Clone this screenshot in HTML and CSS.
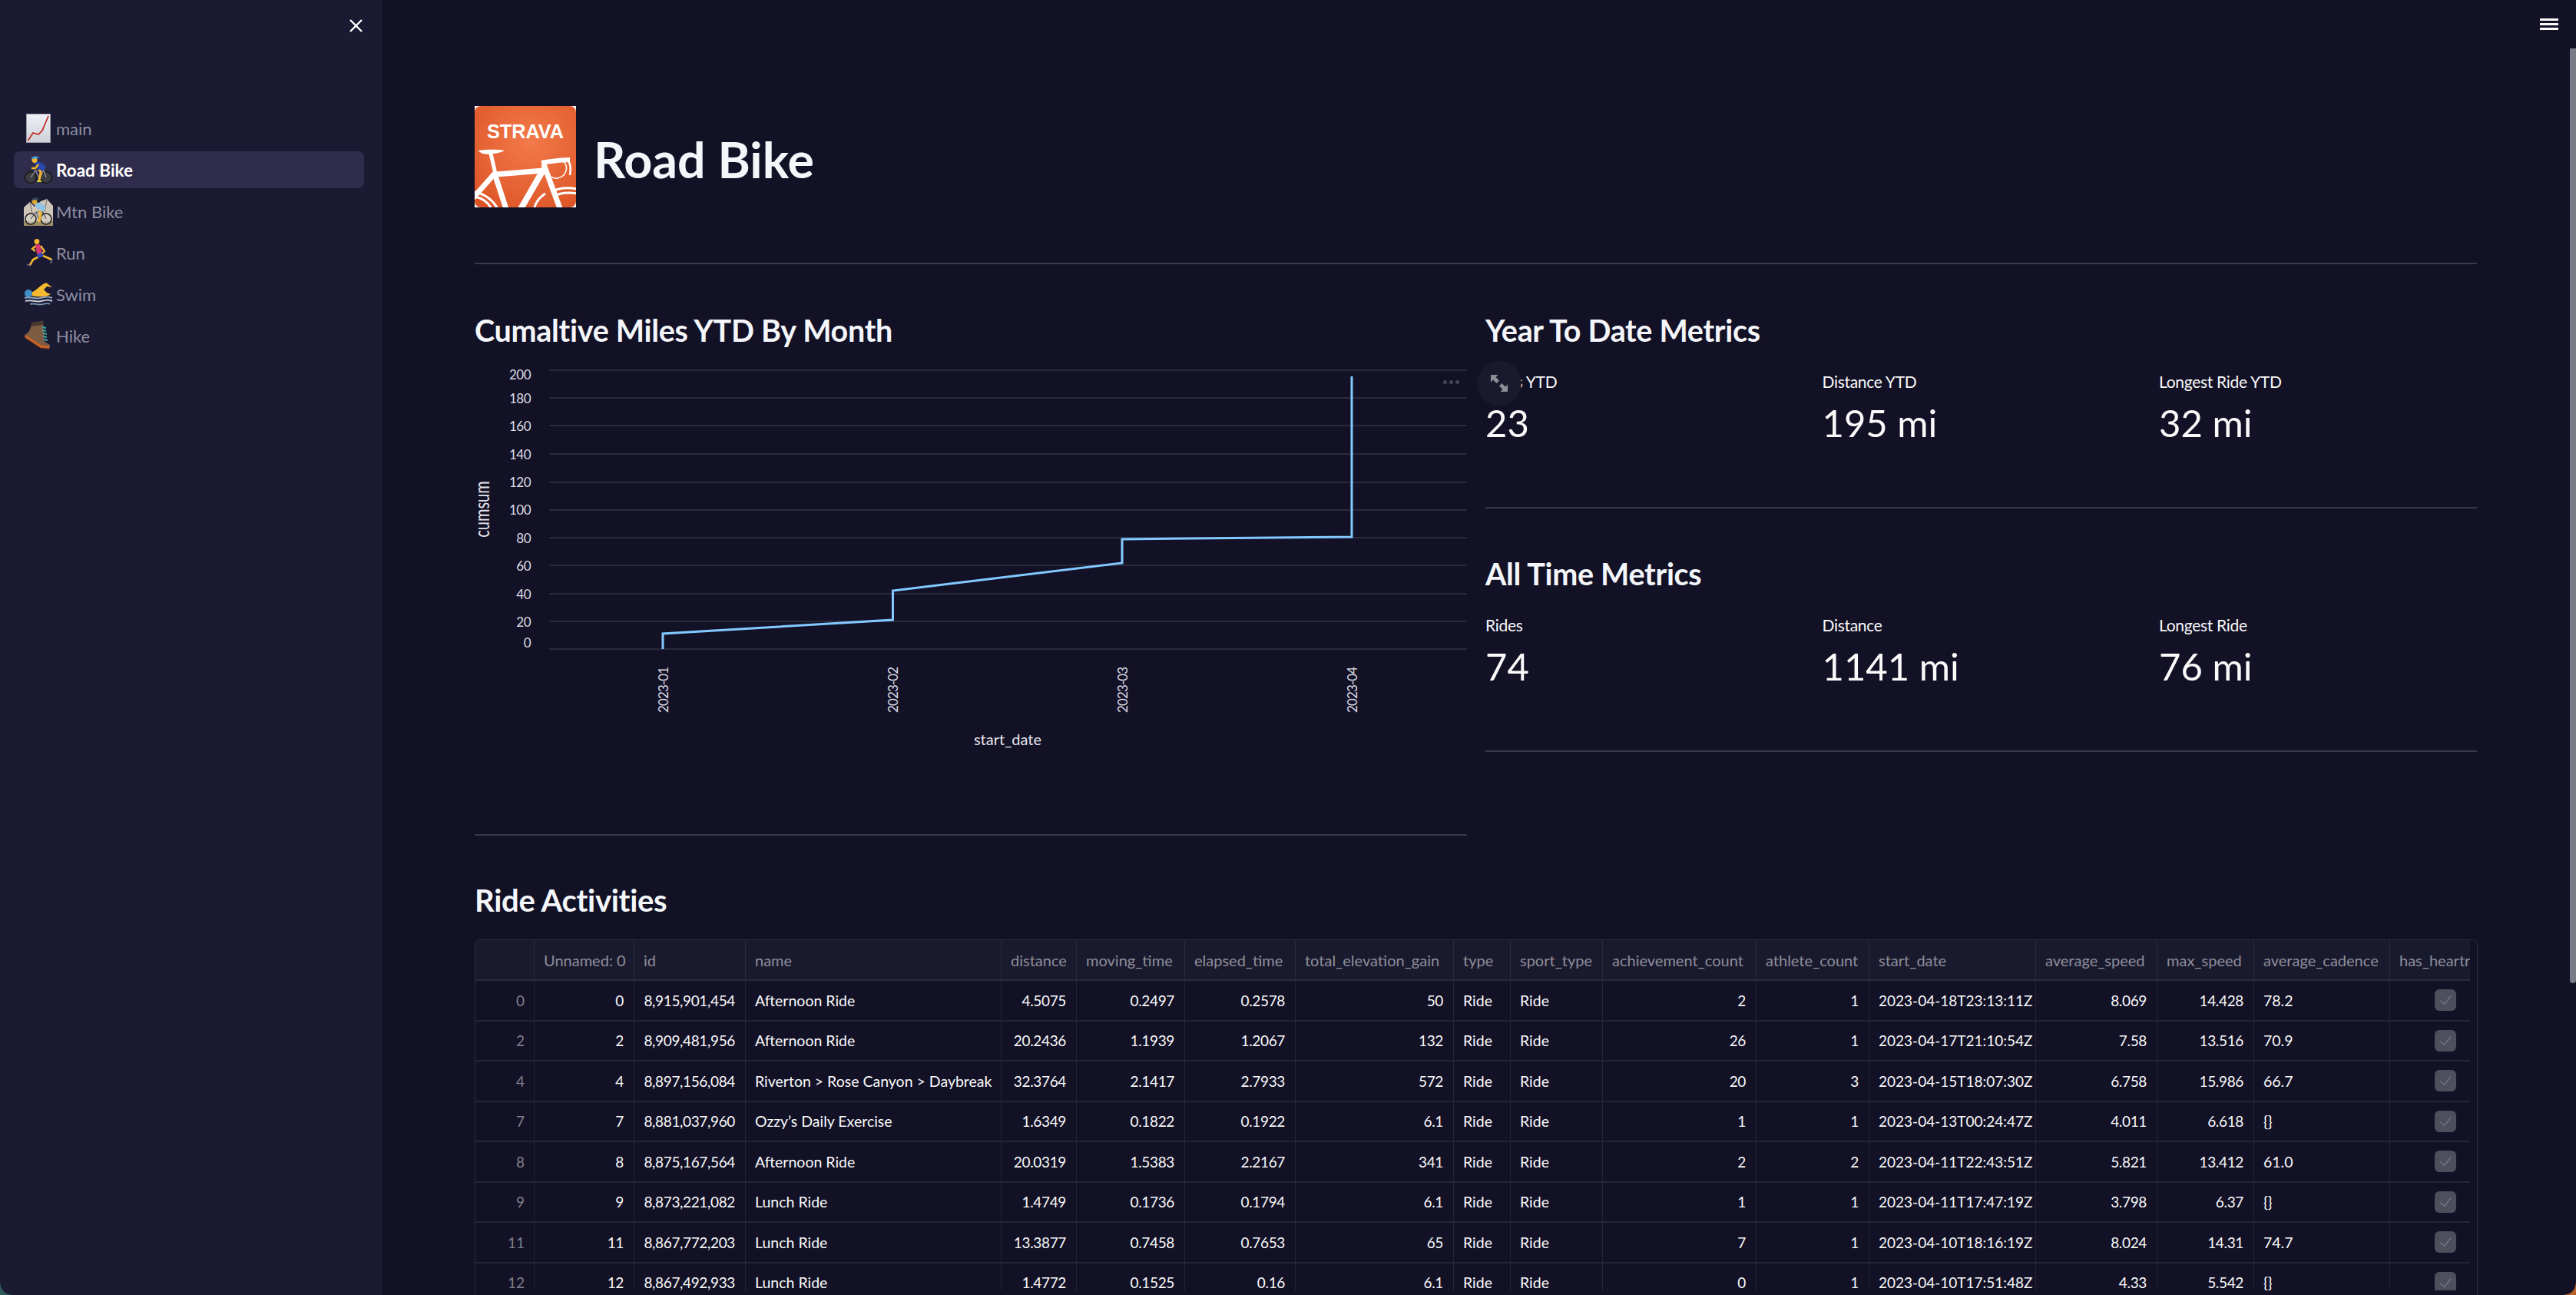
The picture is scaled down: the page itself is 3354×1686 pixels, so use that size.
FILE: index.html
```html
<!DOCTYPE html>
<html lang="en">
<head>
    <meta charset="UTF-8">
    <title>Road Bike</title>
    <link rel="stylesheet" href="styles.css">
</head>
<body>
<div class="app">
    <aside class="sidebar">
        <button class="close-btn" aria-label="Close sidebar">
            <svg width="17" height="17" viewBox="0 0 17 17"><path d="M1 1L16 16M16 1L1 16" stroke="#fff" stroke-width="2.4" fill="none"/></svg>
        </button>
        <nav class="nav">
            <a class="nav-item">
                <svg class="emoji" viewBox="0 0 38 38"><defs><linearGradient id="paper" x1="0" y1="0" x2="0" y2="1"><stop offset="0" stop-color="#eef1f5"/><stop offset="1" stop-color="#cdd1d8"/></linearGradient></defs><rect x="3.500" y="0.500" width="31" height="37" fill="url(#paper)" stroke="#9b9da5"/><path d="M5.500 35L12 25L19 27L24 22L32 3" stroke="#c0281f" stroke-width="1.700" fill="none"/></svg>
                <span>main</span>
            </a>
            <a class="nav-item active">
                <svg class="emoji" viewBox="0 0 38 38"><circle cx="9" cy="29" r="7.500" fill="#3c3d42" stroke="#17171a" stroke-width="1.600"/><circle cx="29" cy="29" r="7.500" fill="#3c3d42" stroke="#17171a" stroke-width="1.600"/><path d="M9 29L15 20L26 20L29 29M15 20L20 30L26 20" stroke="#9a9ba1" stroke-width="1.200" fill="none"/><path d="M20 15L22 23L20 33" stroke="#f4b92f" stroke-width="3" fill="none"/><path d="M17 34H23" stroke="#c7d62e" stroke-width="2"/><path d="M13 10C17 7 24 9 28 14C29 18 26 20 23 20L19 18Z" fill="#2b46ab"/><path d="M19 12L15 17L10 17" stroke="#f4b92f" stroke-width="2.400" fill="none"/><circle cx="14" cy="6.500" r="3.400" fill="#f4b92f"/><path d="M9.500 5C11 0.500 18 0 20 4L14 4.500Z" fill="#3f9bd8"/></svg>
                <span>Road Bike</span>
            </a>
            <a class="nav-item">
                <svg class="emoji" viewBox="0 0 38 38"><path d="M0 38V14L8 7L14 13L22 6L30 3L38 12V38Z" fill="#cfc6b9"/><path d="M8 7L11 22M30 3L27 20M20 8L18 16" stroke="#8f8880" stroke-width="1.500"/><rect y="32" width="38" height="6" fill="#a08f68"/><circle cx="9" cy="29" r="7" fill="#d7d2c8" fill-opacity="0.6" stroke="#1f1f22" stroke-width="1.600"/><circle cx="29" cy="29" r="7" fill="#d7d2c8" fill-opacity="0.6" stroke="#1f1f22" stroke-width="1.600"/><path d="M9 29L16 20L25 20L29 29M16 20L20 30L25 20" stroke="#55565c" stroke-width="1.200" fill="none"/><path d="M20 15L22 23L20 33" stroke="#f4b92f" stroke-width="3" fill="none"/><path d="M13 10C17 6 24 8 28 13C29 17 26 19 23 19L19 17Z" fill="#8fc4e6"/><circle cx="14" cy="6.500" r="3.400" fill="#e0a92a"/><path d="M9.500 5C11 0.500 18 0 20 4L14 4.500Z" fill="#33475e"/></svg>
                <span>Mtn Bike</span>
            </a>
            <a class="nav-item">
                <svg class="emoji" viewBox="0 0 38 38"><circle cx="17" cy="4.500" r="3.400" fill="#f4b92f"/><path d="M17 9L11 14L15 17" stroke="#f4b92f" stroke-width="2.400" fill="none"/><path d="M15 9L21 8L24 19L17 21Z" fill="#d9376f"/><path d="M22 10L27 17L23 21" stroke="#f4b92f" stroke-width="2.200" fill="none"/><path d="M17 21L24 19L25 24L18 26Z" fill="#2f4fb5"/><path d="M18 25L12 28L8 35" stroke="#f4b92f" stroke-width="2.600" fill="none"/><path d="M25 23L32 26L36 28" stroke="#f4b92f" stroke-width="2.600" fill="none"/><path d="M4 34L9 36M37 27L35 33" stroke="#6d7078" stroke-width="1.800"/></svg>
                <span>Run</span>
            </a>
            <a class="nav-item swim">
                <svg class="emoji" viewBox="0 0 38 32"><path d="M11 13C15 12 20 6 25 3L29 1L37 7L30 6L26 10L30 14L35 16C30 20 18 20 10 18Z" fill="#f4b92f"/><circle cx="6" cy="15" r="5" fill="#3f8fc9"/><path d="M1 21C8 18 14 23 22 21S32 19 37 21" stroke="#8fa8c4" stroke-width="2" fill="none"/><path d="M2 25C9 22 15 27 23 25S32 23 37 25" stroke="#c6d2e0" stroke-width="2" fill="none"/><path d="M8 29C14 27 18 31 25 29S32 28 34 29" stroke="#7d92ad" stroke-width="1.800" fill="none"/></svg>
                <span>Swim</span>
            </a>
            <a class="nav-item">
                <svg class="emoji" viewBox="0 0 38 38"><path d="M10 2L25 0L27 27L34 31L33 36L22 35L2 22L1 18C6 16 10 10 10 2Z" fill="#7c5c43"/><path d="M10 2L25 0L25 5L10 7Z" fill="#4a3a2e"/><path d="M1 19L2 22L22 35L33 36L34 31L33 33L22 31L4 19Z" fill="#c9622a"/><path d="M2 23L22 37L33 38L33 36L22 35L2 22Z" fill="#2c2320"/><path d="M24 8L29 9M24 12L29 13M25 16L30 17M25 20L30 21M26 24L31 25" stroke="#3fa6a3" stroke-width="2"/></svg>
                <span>Hike</span>
            </a>
        </nav>
    </aside>

    <main class="main">
        <header class="title-row">
            <svg class="strava-logo" width="132" height="132" viewBox="0 0 132 132">
                <defs>
                    <radialGradient id="stravaBg" cx="0.55" cy="0.35" r="0.8"><stop offset="0" stop-color="#f27a4a"/><stop offset="1" stop-color="#dc5325"/></radialGradient>
                    <clipPath id="stravaClip"><rect width="132" height="132"/></clipPath>
                </defs>
                <rect width="132" height="132" fill="#fff"/>
                <rect width="132" height="132" rx="8" fill="url(#stravaBg)"/>
                <text class="strava-word" x="66" y="42" text-anchor="middle" textLength="100" lengthAdjust="spacingAndGlyphs">STRAVA</text>
                <g clip-path="url(#stravaClip)" fill="none" stroke="#fff">
                    <path d="M4 58C14 57 28 56 39 58C32 62 24 62 18 63L10 62Z" fill="#fff" stroke="none"/>
                    <path d="M21 62L27 88" stroke-width="5"/>
                    <path d="M26 88L41 134" stroke-width="7"/>
                    <path d="M26 88L-4 122" stroke-width="7"/>
                    <path d="M28 89L90 84" stroke-width="7"/>
                    <path d="M90 82L60 134" stroke-width="8"/>
                    <path d="M90 76L112 136" stroke-width="7"/>
                    <path d="M87 74C100 72 110 70 124 70" stroke-width="6"/>
                    <path d="M112 72C120 72 122 82 116 90C112 94 104 96 100 92" stroke-width="1.600"/>
                    <path d="M122 72C126 76 125 84 124 90" stroke-width="2.500"/>
                    <path d="M100 112C110 106 122 106 134 108" stroke-width="3"/>
                    <path d="M102 118C112 112 122 112 134 114" stroke-width="3"/>
                    <path d="M78 132C80 124 86 118 92 114" stroke-width="3"/>
                    <path d="M0 112C12 114 24 122 30 134" stroke-width="3"/>
                    <path d="M0 118C10 120 18 126 22 134" stroke-width="3"/>
                </g>
            </svg>
            <h1>Road Bike</h1>
        </header>
        <hr class="rule rule-top">

        <section class="columns">
            <div class="col">
                <h2>Cumaltive Miles YTD By Month</h2>
                <div class="chart-wrap">
                    <svg class="chart" width="1292" height="590" viewBox="618 470 1292 590">
                        <g class="grid">
                            <line x1="715" x2="1910" y1="482" y2="482"/>
                            <line x1="715" x2="1910" y1="518" y2="518"/>
                            <line x1="715" x2="1910" y1="554" y2="554"/>
                            <line x1="715" x2="1910" y1="591" y2="591"/>
                            <line x1="715" x2="1910" y1="628" y2="628"/>
                            <line x1="715" x2="1910" y1="664" y2="664"/>
                            <line x1="715" x2="1910" y1="700" y2="700"/>
                            <line x1="715" x2="1910" y1="736" y2="736"/>
                            <line x1="715" x2="1910" y1="773" y2="773"/>
                            <line x1="715" x2="1910" y1="809" y2="809"/>
                            <line x1="715" x2="1910" y1="845" y2="845"/>
                        </g>
                        <g class="y-ticks">
                            <text x="691" y="494">200</text>
                            <text x="691" y="525">180</text>
                            <text x="691" y="561">160</text>
                            <text x="691" y="598">140</text>
                            <text x="691" y="634">120</text>
                            <text x="691" y="670">100</text>
                            <text x="691" y="707">80</text>
                            <text x="691" y="743">60</text>
                            <text x="691" y="780">40</text>
                            <text x="691" y="816">20</text>
                            <text x="691" y="843">0</text>
                        </g>
                        <path class="line" d="M863 845V825L1162.500 807V769L1461 733V702L1760 699V490"/>
                        <g class="x-ticks">
                            <text transform="translate(870 928) rotate(-90)">2023-01</text>
                            <text transform="translate(1169 928) rotate(-90)">2023-02</text>
                            <text transform="translate(1468 928) rotate(-90)">2023-03</text>
                            <text transform="translate(1767 928) rotate(-90)">2023-04</text>
                        </g>
                        <text class="axis-title" transform="translate(637 663) scale(1.3 1) rotate(-90)" text-anchor="middle">cumsum</text>
                        <text class="axis-title" x="1312" y="970" text-anchor="middle">start_date</text>
                    </svg>
                    <div class="chart-dots"><i></i><i></i><i></i></div>
                    <button class="expand-btn" aria-label="View fullscreen">
                        <svg width="22" height="22" viewBox="0 0 22 22"><path d="M0 0H9.500L6.500 3L11 7.500L7.500 11L3 6.500L0 9.500ZM22 22H12.500L15.500 19L11 14.500L14.500 11L19 15.500L22 12.500Z" fill="#8d8d97"/></svg>
                    </button>
                </div>
                <hr class="rule rule-chart">
            </div>
            <div class="col">
                <h2>Year To Date Metrics</h2>
                <div class="metrics">
                    <div class="metric"><div class="metric-label">Rides YTD</div><div class="metric-value">23</div></div>
                    <div class="metric"><div class="metric-label">Distance YTD</div><div class="metric-value">195 mi</div></div>
                    <div class="metric"><div class="metric-label">Longest Ride YTD</div><div class="metric-value">32 mi</div></div>
                </div>
                <hr class="rule rule-metrics">
                <h2>All Time Metrics</h2>
                <div class="metrics">
                    <div class="metric"><div class="metric-label">Rides</div><div class="metric-value">74</div></div>
                    <div class="metric"><div class="metric-label">Distance</div><div class="metric-value">1141 mi</div></div>
                    <div class="metric"><div class="metric-label">Longest Ride</div><div class="metric-value">76 mi</div></div>
                </div>
                <hr class="rule rule-metrics">
            </div>
        </section>

        <h2 class="table-heading">Ride Activities</h2>
        <div class="table-frame">
            <div class="table-clip">
                <table class="rides">
                    <colgroup>
                        <col class="w-idx"><col class="w-unnamed"><col class="w-id"><col class="w-name"><col class="w-distance"><col class="w-moving"><col class="w-elapsed"><col class="w-elev"><col class="w-type"><col class="w-sport"><col class="w-achieve"><col class="w-athlete"><col class="w-date"><col class="w-avg"><col class="w-max"><col class="w-cadence"><col class="w-heart">
                    </colgroup>
                    <thead>
                        <tr><th></th><th>Unnamed: 0</th><th>id</th><th>name</th><th>distance</th><th>moving_time</th><th>elapsed_time</th><th>total_elevation_gain</th><th>type</th><th>sport_type</th><th>achievement_count</th><th>athlete_count</th><th>start_date</th><th>average_speed</th><th>max_speed</th><th>average_cadence</th><th>has_heartrate</th></tr>
                    </thead>
                    <tbody>
                        <tr><td class="idx">0</td><td class="num">0</td><td class="num">8,915,901,454</td><td>Afternoon Ride</td><td class="num">4.5075</td><td class="num">0.2497</td><td class="num">0.2578</td><td class="num">50</td><td>Ride</td><td>Ride</td><td class="num">2</td><td class="num">1</td><td class="date">2023-04-18T23:13:11Z</td><td class="num">8.069</td><td class="num">14.428</td><td>78.2</td><td><span class="check"></span></td></tr>
                        <tr><td class="idx">2</td><td class="num">2</td><td class="num">8,909,481,956</td><td>Afternoon Ride</td><td class="num">20.2436</td><td class="num">1.1939</td><td class="num">1.2067</td><td class="num">132</td><td>Ride</td><td>Ride</td><td class="num">26</td><td class="num">1</td><td class="date">2023-04-17T21:10:54Z</td><td class="num">7.58</td><td class="num">13.516</td><td>70.9</td><td><span class="check"></span></td></tr>
                        <tr><td class="idx">4</td><td class="num">4</td><td class="num">8,897,156,084</td><td>Riverton &gt; Rose Canyon &gt; Daybreak</td><td class="num">32.3764</td><td class="num">2.1417</td><td class="num">2.7933</td><td class="num">572</td><td>Ride</td><td>Ride</td><td class="num">20</td><td class="num">3</td><td class="date">2023-04-15T18:07:30Z</td><td class="num">6.758</td><td class="num">15.986</td><td>66.7</td><td><span class="check"></span></td></tr>
                        <tr><td class="idx">7</td><td class="num">7</td><td class="num">8,881,037,960</td><td>Ozzy’s Daily Exercise</td><td class="num">1.6349</td><td class="num">0.1822</td><td class="num">0.1922</td><td class="num">6.1</td><td>Ride</td><td>Ride</td><td class="num">1</td><td class="num">1</td><td class="date">2023-04-13T00:24:47Z</td><td class="num">4.011</td><td class="num">6.618</td><td>{}</td><td><span class="check"></span></td></tr>
                        <tr><td class="idx">8</td><td class="num">8</td><td class="num">8,875,167,564</td><td>Afternoon Ride</td><td class="num">20.0319</td><td class="num">1.5383</td><td class="num">2.2167</td><td class="num">341</td><td>Ride</td><td>Ride</td><td class="num">2</td><td class="num">2</td><td class="date">2023-04-11T22:43:51Z</td><td class="num">5.821</td><td class="num">13.412</td><td>61.0</td><td><span class="check"></span></td></tr>
                        <tr><td class="idx">9</td><td class="num">9</td><td class="num">8,873,221,082</td><td>Lunch Ride</td><td class="num">1.4749</td><td class="num">0.1736</td><td class="num">0.1794</td><td class="num">6.1</td><td>Ride</td><td>Ride</td><td class="num">1</td><td class="num">1</td><td class="date">2023-04-11T17:47:19Z</td><td class="num">3.798</td><td class="num">6.37</td><td>{}</td><td><span class="check"></span></td></tr>
                        <tr><td class="idx">11</td><td class="num">11</td><td class="num">8,867,772,203</td><td>Lunch Ride</td><td class="num">13.3877</td><td class="num">0.7458</td><td class="num">0.7653</td><td class="num">65</td><td>Ride</td><td>Ride</td><td class="num">7</td><td class="num">1</td><td class="date">2023-04-10T18:16:19Z</td><td class="num">8.024</td><td class="num">14.31</td><td>74.7</td><td><span class="check"></span></td></tr>
                        <tr><td class="idx">12</td><td class="num">12</td><td class="num">8,867,492,933</td><td>Lunch Ride</td><td class="num">1.4772</td><td class="num">0.1525</td><td class="num">0.16</td><td class="num">6.1</td><td>Ride</td><td>Ride</td><td class="num">0</td><td class="num">1</td><td class="date">2023-04-10T17:51:48Z</td><td class="num">4.33</td><td class="num">5.542</td><td>{}</td><td><span class="check"></span></td></tr>
                    </tbody>
                </table>
            </div>
        </div>

        <button class="menu-btn" aria-label="Menu"><span></span><span></span><span></span></button>
        <div class="scroll-thumb"></div>
    </main>
</div>
</body>
</html>
```

FILE: styles.css
```css
* {
    box-sizing: border-box;
}

html, body {
    margin: 0;
    height: 100%;
    overflow: hidden;
}

body {
    font-family: "Lato", "Noto Sans", sans-serif;
    background-color: #121126;
    color: #fafafa;
}

button {
    background: none;
    border: none;
    padding: 0;
    display: flex;
}

.app {
    display: flex;
    height: 100vh;
    position: relative;
}

/* window corners, the desktop shows through them */
.app::before,
.app::after {
    content: "";
    position: absolute;
    bottom: 0;
    width: 15px;
    height: 15px;
    z-index: 3;
}

.app::before {
    left: 0;
    background: radial-gradient(circle at top right, transparent 14px, #2f5a5c 15px);
}

.app::after {
    right: 0;
    background: radial-gradient(circle at top left, transparent 14px, #b8602c 15px);
}

/* sidebar */
.sidebar {
    width: 498px;
    flex-shrink: 0;
    background-color: #1a1a33;
    padding: 25px 24px 0 18px;
}

.close-btn {
    margin-left: auto;
    margin-right: 2px;
}

.nav {
    margin-top: 101px;
    display: flex;
    flex-direction: column;
    gap: 6px;
}

.nav-item {
    height: 48px;
    padding-left: 13px;
    border-radius: 8px;
    display: flex;
    align-items: center;
    gap: 4px;
    font-size: 22px;
    color: #8d8d9f;
}

.nav-item.active {
    background-color: #302d4c;
    color: #fff;
    font-weight: 700;
    font-size: 22.5px;
}

.emoji {
    width: 38px;
    height: 38px;
    flex-shrink: 0;
}

.nav-item.swim .emoji {
    height: 32px;
}

/* main */
.main {
    flex: 1;
    min-width: 0;
    position: relative;
    padding: 138px 129px 0 120px;
    overflow: hidden;
}

.title-row {
    display: flex;
    align-items: center;
    gap: 23px;
}

.strava-logo {
    flex-shrink: 0;
}

.strava-word {
    font-family: "Liberation Sans", sans-serif;
    font-weight: 700;
    font-size: 26px;
    fill: #fff;
}

h1 {
    margin: 0 0 -6px;
    font-size: 64.5px;
    line-height: 80px;
    font-weight: 700;
    white-space: nowrap;
    color: #f4f6fa;
}

h2 {
    margin: 0;
    font-size: 39.5px;
    line-height: 52px;
    font-weight: 700;
    letter-spacing: -0.3px;
    color: #f4f6fa;
}

.rule {
    margin: 0;
    border: none;
    height: 2px;
    background-color: #3a3a4c;
}

.rule-top {
    margin-top: 72px;
    margin-bottom: 60px;
}

.columns {
    display: grid;
    grid-template-columns: 1292px 1291px;
    gap: 24px;
}

.chart-wrap {
    position: relative;
    margin-top: 14px;
}

.chart {
    display: block;
}

.grid line {
    stroke: #2a2a3b;
    stroke-width: 2;
}

.line {
    fill: none;
    stroke: #83c9ff;
    stroke-width: 3;
}

.y-ticks text {
    font-size: 17px;
    letter-spacing: -0.5px;
    fill: #dcdce4;
    text-anchor: end;
}

.x-ticks text {
    font-size: 17px;
    letter-spacing: -0.9px;
    fill: #dcdce4;
}

.axis-title {
    font-size: 20px;
    fill: #e4e4ea;
}

.chart-dots {
    position: absolute;
    left: 1261px;
    top: 25px;
    display: flex;
    gap: 3px;
}

.chart-dots i {
    width: 5px;
    height: 5px;
    border-radius: 50%;
    background-color: #45455a;
}

.expand-btn {
    position: absolute;
    left: 1305px;
    top: 0;
    width: 58px;
    height: 58px;
    border-radius: 50%;
    background-color: #1a1a2f;
    align-items: center;
    justify-content: center;
    z-index: 2;
}

.rule-chart {
    margin-top: 26px;
}

.metrics {
    display: grid;
    grid-template-columns: repeat(3, 438.5px);
    margin-top: 26px;
}

.metric-label {
    font-size: 21px;
    line-height: 30px;
    letter-spacing: -0.3px;
}

.metric-value {
    margin-top: 8px;
    font-size: 49px;
    line-height: 60px;
}

.rule-metrics {
    margin-top: 80px;
    margin-bottom: 59px;
}

.table-heading {
    margin-top: 58px;
    margin-bottom: 25px;
    font-size: 40px;
}

/* data table */
.table-frame {
    width: 2608px;
    height: 480px;
    border: 1px solid #2b2b3e;
    border-radius: 6px;
    overflow: hidden;
}

.table-clip {
    width: 2597px;
    height: 456px;
    overflow: hidden;
}

.rides {
    table-layout: fixed;
    width: 2640px;
    border-collapse: separate;
    border-spacing: 0;
    font-size: 19.5px;
}

.rides th {
    height: 53px;
    padding: 0 12px;
    background-color: #1a1a2e;
    color: #8e8e9a;
    font-size: 20px;
    font-weight: 400;
    text-align: left;
    white-space: nowrap;
    overflow: hidden;
    border-right: 1px solid #2a2a3c;
    border-bottom: 2px solid #2a2a3c;
}

.rides td {
    height: 52.5px;
    padding: 0 12px;
    white-space: nowrap;
    overflow: hidden;
    border-right: 1px solid #25253a;
    border-bottom: 2px solid #25253a;
}

.rides .num {
    font-size: 19px;
    letter-spacing: -0.35px;
    text-align: right;
    padding-right: 13px;
}

.rides .date {
    font-size: 19px;
}

.rides .idx {
    font-size: 19px;
    text-align: right;
    color: #80808c;
}

.check {
    display: block;
    position: relative;
    margin-left: 46px;
    width: 28px;
    height: 28px;
    border-radius: 6px;
    background-color: #4e4e5d;
}

.check::after {
    content: "";
    position: absolute;
    left: 10px;
    top: 5px;
    width: 7px;
    height: 13px;
    border-right: 1.5px solid #80808c;
    border-bottom: 1.5px solid #80808c;
    transform: rotate(38deg);
}

.w-idx { width: 77px; }
.w-unnamed { width: 130px; }
.w-id { width: 145px; }
.w-name { width: 333px; }
.w-distance { width: 98px; }
.w-moving { width: 141px; }
.w-elapsed { width: 144px; }
.w-elev { width: 206px; }
.w-type { width: 74px; }
.w-sport { width: 120px; }
.w-achieve { width: 200px; }
.w-athlete { width: 147px; }
.w-date { width: 217px; }
.w-avg { width: 158px; }
.w-max { width: 126px; }
.w-cadence { width: 177px; }
.w-heart { width: 247px; }

.menu-btn {
    position: absolute;
    top: 24px;
    right: 23px;
    flex-direction: column;
    gap: 3px;
}

.menu-btn span {
    width: 24px;
    height: 3px;
    background-color: #fafafa;
}

.scroll-thumb {
    position: absolute;
    top: 63px;
    right: 0;
    width: 8px;
    height: 1217px;
    border-radius: 0 0 4px 4px;
    background-color: #7b7b87;
}
```
